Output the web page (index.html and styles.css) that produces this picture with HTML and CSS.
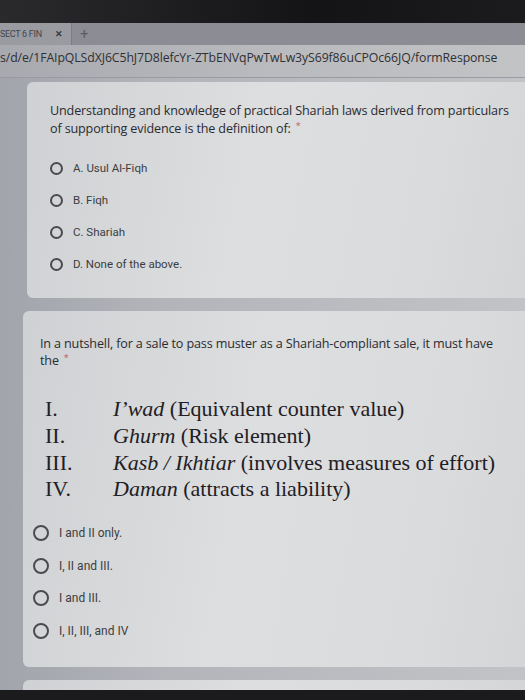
FILE: index.html
```html
<!DOCTYPE html>
<html>
<head>
<meta charset="utf-8">
<link rel="stylesheet" href="styles.css">
</head>
<body>
<div class="screen">
  <div class="bezel"></div>
  <div class="tabs">
    <div class="tab"><span class="tab-title">SECT 6 FIN</span><span class="tab-close">✕</span></div>
    <div class="tab-new">+</div>
  </div>
  <div class="urlbar">s/d/e/1FAIpQLSdXJ6C5hJ7D8lefcYr-ZTbENVqPwTwLw3yS69f86uCPOc66JQ/formResponse</div>
  <div class="page">
    <div class="card card-one">
      <p class="question">Understanding and knowledge of practical Shariah laws derived from particulars of supporting evidence is the definition of:<span class="req">*</span></p>
      <ul class="options">
        <li><span class="radio"></span>A. Usul Al-Fiqh</li>
        <li><span class="radio"></span>B. Fiqh</li>
        <li><span class="radio"></span>C. Shariah</li>
        <li><span class="radio"></span>D. None of the above.</li>
      </ul>
    </div>
    <div class="card card-two">
      <p class="question">In a nutshell, for a sale to pass muster as a Shariah-compliant sale, it must have the<span class="req">*</span></p>
      <ol class="roman">
        <li><span class="num">I.</span><span><i>I’wad</i> (Equivalent counter value)</span></li>
        <li><span class="num">II.</span><span><i>Ghurm</i> (Risk element)</span></li>
        <li><span class="num">III.</span><span><i>Kasb / Ikhtiar</i> (involves measures of effort)</span></li>
        <li><span class="num">IV.</span><span><i>Daman</i> (attracts a liability)</span></li>
      </ol>
      <ul class="options options-two">
        <li><span class="radio"></span>I and II only.</li>
        <li><span class="radio"></span>I, II and III.</li>
        <li><span class="radio"></span>I and III.</li>
        <li><span class="radio"></span>I, II, III, and IV</li>
      </ul>
    </div>
    <div class="card card-three"></div>
  </div>
  <div class="bezel-bottom"></div>
</div>
</body>
</html>
```

FILE: styles.css
```css
* { box-sizing: border-box; }
html, body { margin: 0; padding: 0; }
body {
  width: 525px;
  height: 700px;
  overflow: hidden;
  background: #1b1b1d;
  font-family: Roboto, "Liberation Sans", sans-serif;
}
.screen {
  display: flex;
  flex-direction: column;
  height: 700px;
}
.bezel {
  height: 23px;
  background: linear-gradient(90deg, #2a2a2d, #141416 60%, #1b1b1d);
  flex: none;
}
.tabs {
  height: 22px;
  flex: none;
  display: flex;
  align-items: center;
  background: #8c8d94;
}
.tab {
  width: 72px;
  height: 22px;
  display: flex;
  align-items: center;
  gap: 13px;
  background: #9a9ba1;
  overflow: hidden;
  border-right: 1px solid #7c7d84;
}
.tab-title {
  font-size: 9px;
  color: #45464c;
  white-space: nowrap;
  letter-spacing: -0.3px;
}
.tab-close {
  font-size: 9px;
  color: #38393e;
  font-weight: bold;
}
.tab-new {
  margin-left: 8px;
  font-size: 15px;
  color: #5c5d63;
  line-height: 1;
}
.urlbar {
  height: 33px;
  flex: none;
  display: flex;
  align-items: center;
  padding-bottom: 8px;
  background: linear-gradient(90deg, #a8a9af, #b9babd 50%, #c2c3c5);
  border-bottom: 1px solid #9a9ba0;
  font-family: "Open Sans", sans-serif;
  font-size: 12.3px;
  color: #2f3034;
  white-space: nowrap;
  overflow: hidden;
  letter-spacing: -0.1px;
}
.page {
  flex: 1;
  background: linear-gradient(90deg, #a2a4ab, #b2b4ba 30%, #c1c3c6);
  padding: 4px 0 0 27px;
  display: flex;
  flex-direction: column;
  gap: 13px;
  overflow: hidden;
}
.card {
  background: linear-gradient(100deg, #cfd1d4, #dcdedf 45%, #d9dbdc 80%, #d3d5d7);
  border-radius: 6px 0 0 6px;
  color: #2a2b30;
  flex: none;
}
.card-one {
  height: 216px;
  padding: 20px 0 0 23px;
}
.card-two {
  height: 356px;
  margin-left: -4px;
  padding: 24px 0 0 17px;
}
.card-three {
  height: 20px;
  margin-left: -4px;
}
.question {
  margin: 0;
  font-family: "Open Sans", sans-serif;
  font-size: 12.6px;
  line-height: 18px;
  letter-spacing: -0.15px;
  padding-right: 4px;
}
.card-two .question {
  font-size: 12.6px;
  line-height: 17px;
  padding-right: 22px;
}
.req {
  margin-left: 5px;
  color: #c45a5a;
  font-size: 9px;
  line-height: 1;
  vertical-align: 4px;
}
.options {
  list-style: none;
  margin: 22px 0 0 0;
  padding: 0;
  display: flex;
  flex-direction: column;
  gap: 16px;
}
.options li {
  display: flex;
  align-items: center;
  gap: 10px;
  height: 16px;
  font-size: 11.5px;
  color: #3c3d42;
}
.radio {
  width: 13px;
  height: 13px;
  border: 2px solid #4a4b50;
  border-radius: 50%;
  flex: none;
}
.roman {
  list-style: none;
  margin: 27px 0 0 5px;
  padding: 0;
  font-family: "Liberation Serif", "Times New Roman", serif;
  font-size: 22px;
  line-height: 26.8px;
  color: #1f2024;
}
.roman li {
  display: flex;
}
.num {
  width: 68px;
  flex: none;
}
.options-two {
  margin: 22px 0 0 -7px;
  gap: 16.5px;
}
.options-two li {
  font-size: 12px;
}
.options-two .radio {
  width: 16px;
  height: 16px;
}
.bezel-bottom {
  height: 10px;
  flex: none;
  background: #1b1b1d;
}
```
